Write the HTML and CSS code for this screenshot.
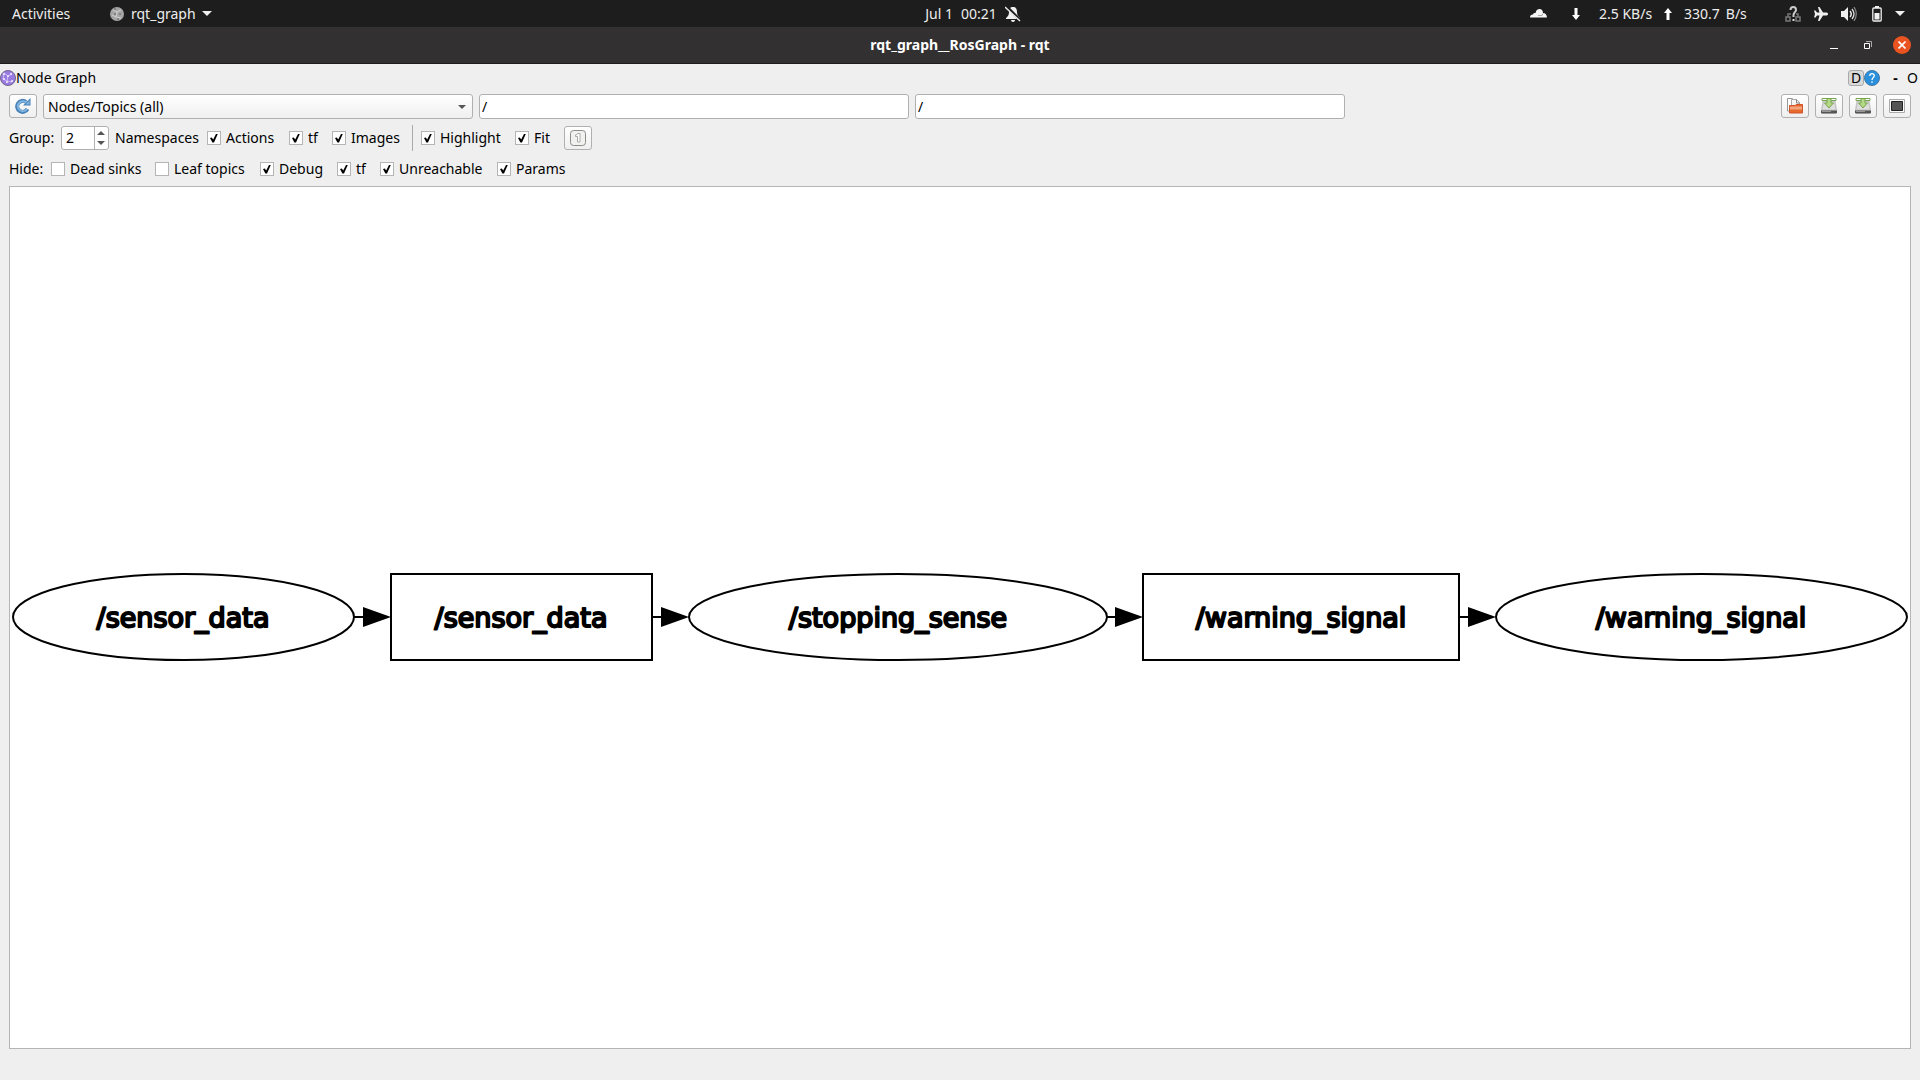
FILE: index.html
```
<!DOCTYPE html>
<html lang="en">
<head>
<meta charset="utf-8">
<title>rqt_graph__RosGraph - rqt</title>
<link rel="stylesheet" href="styles.css">
</head>
<body>
<header class="panel">
  <div class="panel-left">
    <button class="panel-button activities" type="button">Activities</button>
    <button class="panel-button app-menu" type="button">
      <svg class="app-icon" width="14" height="14" viewBox="0 0 14 14" aria-hidden="true"><circle cx="7" cy="7" r="7" fill="#a5a5a5"/><g stroke="#d0d0d0" fill="none"><path d="M3 3l4 2 4-2M7 5l-1 5 5 1M6 10l-4-2"/></g><g fill="#777"><circle cx="5" cy="7" r="1"/><circle cx="10" cy="7" r="1"/><circle cx="5" cy="2" r="1"/><circle cx="8" cy="12" r="1"/></g></svg>
      <span class="app-name">rqt_graph</span>
      <svg width="10" height="5" viewBox="0 0 10 5" aria-hidden="true"><path d="M0 0h10L5 5z" fill="#f0f0f0"/></svg>
    </button>
  </div>
  <button class="panel-button clock" type="button">
    <span>Jul 1</span><span>00:21</span>
    <svg class="bell" width="16" height="16" viewBox="0 0 16 16" aria-hidden="true"><path d="M8 1C5 1 4 3 4 6c0 3-1 4-3 6v1h14v-1c-2-2-3-3-3-6 0-3-1-5-4-5zM6 14h4c0 1-1 2-2 2s-2-1-2-2z" fill="#f0f0f0"/><path d="M1 0l15 15" stroke="#1d1d1d" stroke-width="3"/><path d="M0 1l15 14" stroke="#f0f0f0" stroke-width="1.4"/></svg>
  </button>
  <div class="panel-right">
    <svg class="cloud" width="17" height="9" viewBox="0 0 17 9" aria-label="Cloud"><path d="M0 8.500C0 6.500 1 5.500 3 5.500 3.500 4 4.500 3.800 5.500 4 6 1.500 7.500 0 9.500 0c2 0 3.500 1.500 3.500 4 2.200 0 4 1.800 4 4.500z" fill="#f5f5f5"/><path d="M8 6.500h4l1-2" stroke="#777" stroke-width=".6" fill="none"/></svg>
    <svg class="down" width="8" height="12" viewBox="0 0 8 12" aria-label="Download"><path d="M2.500 0h3v7H8l-4 5-4-5h2.500z" fill="#fff"/></svg>
    <span class="rate-down">2.5 KB/s</span>
    <svg class="up" width="8" height="12" viewBox="0 0 8 12" aria-label="Upload"><path d="M2.500 12h3V5H8L4 0 0 5h2.500z" fill="#fff"/></svg>
    <span class="rate-up"><span>330.7</span><span>B/s</span></span>
    <svg class="network" width="16" height="16" viewBox="0 0 16 16" aria-label="Network"><g fill="none" stroke="#777" stroke-width="1.500"><path d="M3 11V8h3M13 11V8h-2"/><path d="M1 11h4v4H1zM11 11h4v4h-4z"/></g><path d="M5.500 4C5.500 0 11 0 11 4c0 2-2.500 2.500-2.500 5v2" fill="none" stroke="#ccc" stroke-width="2"/><path d="M7.500 13h2v2h-2z" fill="#ddd"/></svg>
    <svg class="plane" width="14" height="14" viewBox="0 0 14 14" aria-label="Airplane mode"><path d="M4 0h1.500L9 5.500h3.500c2 0 2 3 0 3H9L5.500 14H4l1.500-5.500H3L1.500 10.500H0L1 7 0 3.500h1.500L3 5.500h2.500z" fill="#f0f0f0"/></svg>
    <svg class="sound" width="16" height="14" viewBox="0 0 16 14" aria-label="Volume"><path d="M0 4h3l4-4v14l-4-4H0z" fill="#f0f0f0"/><path d="M9 4q2.500 3 0 6" stroke="#f0f0f0" stroke-width="1.400" fill="none"/><path d="M11 2q4 5 0 10" stroke="#ddd" stroke-width="1.300" fill="none"/><path d="M13 0q4.500 7 0 14" stroke="#888" stroke-width="1.200" fill="none"/></svg>
    <svg class="battery" width="10" height="16" viewBox="0 0 10 16" aria-label="Battery"><path d="M3 0h4v2H3z" fill="#f0f0f0"/><rect x=".8" y="2" width="8.400" height="13" rx="1" fill="none" stroke="#f0f0f0" stroke-width="1.300"/><path d="M2.500 7h5v6.500h-5z" fill="#f0f0f0"/></svg>
    <svg class="menu-arrow" width="10" height="5" viewBox="0 0 10 5" aria-hidden="true"><path d="M0 0h10L5 5z" fill="#f0f0f0"/></svg>
  </div>
</header>

<div class="titlebar">
  <h1 class="title">rqt_graph__RosGraph - rqt</h1>
  <div class="window-buttons">
    <button class="window-button" type="button" aria-label="Minimize"><svg width="8" height="9" viewBox="0 0 8 9"><path d="M0 7.500h8" stroke="#fff"/></svg></button>
    <button class="window-button" type="button" aria-label="Restore"><svg width="8" height="8" viewBox="0 0 8 8"><path d="M2 .5h5.500V6" stroke="#aaa" fill="none"/><path d="M.5 2.500h5v5h-5z" stroke="#fff" fill="none"/></svg></button>
    <button class="window-button close" type="button" aria-label="Close"><svg width="8" height="8" viewBox="0 0 8 8"><path d="M.5.5l7 7M7.500.5l-7 7" stroke="#fff" stroke-width="1.600"/></svg></button>
  </div>
</div>

<main class="window">
  <div class="dock-title">
    <svg width="16" height="16" viewBox="0 0 16 16" aria-hidden="true"><circle cx="8" cy="8" r="7.500" fill="#9a7be0" stroke="#70658f"/><g stroke="#cbb9f5" fill="none"><path d="M4 3l4 3 4-2M8 6l-1 5 5 1M7 11l-4-2 1-6"/></g><g fill="#f2ecff"><circle cx="4" cy="4" r="1"/><circle cx="11" cy="4" r="1"/><circle cx="8" cy="6" r="1"/><circle cx="4" cy="9" r="1"/><circle cx="7" cy="12" r="1"/><circle cx="12" cy="11" r="1"/></g></svg>
    <h2 class="dock-name">Node Graph</h2>
    <div class="dock-buttons">
      <button class="dock-button dock-d" type="button">D</button>
      <button class="dock-button" type="button" aria-label="Help"><svg width="16" height="16" viewBox="0 0 16 16"><circle cx="8" cy="8" r="7.500" fill="#2b90dc" stroke="#3f77a6"/><path d="M5.800 6c0-3 4.500-3 4.500-.4C10.300 7.500 8 7.500 8 10M8 11.300v1.500" fill="none" stroke="#fff" stroke-width="1.300"/></svg></button>
      <button class="dock-button dock-minus" type="button">-</button>
      <button class="dock-button dock-o" type="button">O</button>
    </div>
  </div>

  <div class="toolbar">
    <button class="tool" type="button" aria-label="Refresh"><svg width="16" height="16" viewBox="0 0 16 16"><path d="M12.500 11A5.500 5.500 0 1 1 11 4" fill="none" stroke="#4681b8" stroke-width="4"/><path d="M8 7.500h7.500V0z" fill="#4681b8"/><path d="M12 11A5 5 0 1 1 11 4.300" fill="none" stroke="#82b4df" stroke-width="2"/><path d="M10.500 6.500h4V2.500z" fill="#82b4df"/></svg></button>
    <div class="combo">
      <select class="combo-select" aria-label="Graph type"><option>Nodes/Topics (all)</option></select>
      <svg class="combo-arrow" width="8" height="4" viewBox="0 0 8 4" aria-hidden="true"><path d="M0 0h8L4 4z" fill="#555"/></svg>
    </div>
    <input class="field" type="text" value="/" aria-label="Node filter">
    <input class="field" type="text" value="/" aria-label="Topic filter">
    <div class="file-tools">
      <button class="tool" type="button" aria-label="Load graph"><svg width="16" height="16" viewBox="0 0 16 16"><path d="M.5.500h5l2 2V13h-7z" fill="#fff" stroke="#999"/><path d="M4.500 1.500h5l3 3V13h-8z" fill="#f7f7f7" stroke="#aaa"/><path d="M9.500 1.500v3.500h3.500" fill="none" stroke="#888"/><path d="M2.500 7.500H8L9 6.500h6.500v8.500h-13z" fill="#e7692c" stroke="#d0532a"/><path d="M3 8.500h12v3H3z" fill="#f2a680"/></svg></button>
      <button class="tool" type="button" aria-label="Save graph as DOT"><svg width="16" height="16" viewBox="0 0 16 16"><path d="M1.500 3h13l1.500 9v3.500H0V12z" fill="#c4c4c4"/><path d="M3 4h10l1.500 7.500h-13z" fill="#dedede"/><path d="M0 12.500h16v2l-1 1H1l-1-1z" fill="#555"/><path d="M1 13.500h9" stroke="#999"/><path d="M1 .5h14v2H1z" fill="#fff" stroke="#78a552"/><path d="M6 .5h4V5h2.500L8 10 3.500 5H6z" fill="#b5d986" stroke="#76a44b"/></svg></button>
      <button class="tool" type="button" aria-label="Save graph as SVG"><svg width="16" height="16" viewBox="0 0 16 16"><path d="M1.500 3h13l1.500 9v3.500H0V12z" fill="#c4c4c4"/><path d="M3 4h10l1.500 7.500h-13z" fill="#dedede"/><path d="M0 12.500h16v2l-1 1H1l-1-1z" fill="#555"/><path d="M1 13.500h9" stroke="#999"/><path d="M1 .5h14v2H1z" fill="#fff" stroke="#78a552"/><path d="M6 .5h4V5h2.500L8 10 3.500 5H6z" fill="#b5d986" stroke="#76a44b"/></svg></button>
      <button class="tool" type="button" aria-label="Save graph as image"><svg width="16" height="14" viewBox="0 0 16 14"><path d="M.5.500h15v13H.5z" fill="#fafafa" stroke="#aaa"/><path d="M2.500 2.500h11v9h-11z" fill="#555" stroke="#222"/></svg></button>
    </div>
  </div>

  <div class="options options-group">
    <label for="group">Group:</label>
    <div class="spin">
      <input class="spin-value" id="group" type="number" value="2">
      <svg class="spin-arrows" width="14" height="22" viewBox="0 0 14 22" aria-hidden="true"><path d="M.5 0v22" stroke="#b0b0b0"/><path d="M3 8h8L7 4zM3 14h8l-4 4z" fill="#555"/></svg>
    </div>
    <span>Namespaces</span>
    <label class="check"><input type="checkbox" checked>Actions</label>
    <label class="check"><input type="checkbox" checked>tf</label>
    <label class="check"><input type="checkbox" checked>Images</label>
    <span class="separator"></span>
    <label class="check"><input type="checkbox" checked>Highlight</label>
    <label class="check"><input type="checkbox" checked>Fit</label>
    <button class="tool" type="button" aria-label="Fit in view"><svg width="16" height="16" viewBox="0 0 16 16"><rect x=".5" y=".5" width="15" height="15" rx="3" fill="#f1f1ef" stroke="#8b8b88"/><path d="M5.500 5q2 0 2-1.500h2.500v8.500h-2.500v-5.500h-2z" fill="#fff" stroke="#aaa"/></svg></button>
  </div>

  <div class="options options-hide">
    <span>Hide:</span>
    <label class="check"><input type="checkbox">Dead sinks</label>
    <label class="check"><input type="checkbox">Leaf topics</label>
    <label class="check"><input type="checkbox" checked>Debug</label>
    <label class="check"><input type="checkbox" checked>tf</label>
    <label class="check"><input type="checkbox" checked>Unreachable</label>
    <label class="check"><input type="checkbox" checked>Params</label>
  </div>

  <section class="canvas" aria-label="Node graph">
    <svg class="graph" viewBox="0 0 1900 92">
      <g class="shape">
        <ellipse cx="173.500" cy="45" rx="170.500" ry="43"/>
        <rect x="381" y="2" width="261" height="86"/>
        <ellipse cx="888" cy="45" rx="209" ry="43"/>
        <rect x="1133" y="2" width="316" height="86"/>
        <ellipse cx="1691.500" cy="45" rx="205.500" ry="43"/>
        <path d="M344 45h10M642 45h10M1097 45h9M1449 45h10"/>
      </g>
      <path d="M353 35l28 10-28 10zM651 35l28 10-28 10zM1105 35l28 10-28 10zM1458 35l28 10-28 10z"/>
      <g class="node-label">
        <text x="173" y="55">/sensor_data</text>
        <text x="511" y="55">/sensor_data</text>
        <text x="888" y="55">/stopping_sense</text>
        <text x="1291" y="55">/warning_signal</text>
        <text x="1691" y="55">/warning_signal</text>
      </g>
    </svg>
  </section>
</main>
</body>
</html>
```
FILE: styles.css
```
* {
  box-sizing: border-box;
}

body {
  display: flex;
  flex-direction: column;
  min-height: 100vh;
  margin: 0;
  background: #efefef;
  color: #000;
  font: 14px/20px "Noto Sans", sans-serif;
}

button,
input,
select {
  margin: 0;
  padding: 0;
  color: inherit;
  font: inherit;
}

svg {
  display: block;
  flex: none;
}

/* Desktop panel */
.panel {
  display: grid;
  grid-template-columns: 1fr auto 1fr;
  align-items: center;
  height: 27px;
  background: #1d1d1d;
  color: #ededed;
}

.panel-left,
.panel-right,
.panel-button {
  display: flex;
  align-items: center;
}

.panel-button {
  border: 0;
  background: none;
  white-space: nowrap;
}

.activities {
  width: 98px;
  padding-left: 12px;
}

.app-menu {
  padding-left: 12px;
}

.app-icon {
  margin-right: 7px;
}

.app-name {
  width: 71px;
  text-align: left;
}

.clock {
  gap: 8px;
  padding-left: 26px;
}

.panel-right {
  justify-content: flex-end;
  padding-right: 15px;
  white-space: nowrap;
}

.down {
  margin: 0 19px 0 25px;
}

.rate-down {
  width: 65px;
}

.rate-up {
  display: flex;
  gap: 6px;
  width: 101px;
  margin-left: 12px;
}

.plane,
.sound {
  margin-left: 13px;
}

.battery {
  margin-left: 15px;
}

.menu-arrow {
  margin-left: 13px;
}

/* Window title bar */
.titlebar {
  display: grid;
  grid-template-columns: 1fr auto 1fr;
  align-items: center;
  height: 37px;
  border-bottom: 1px solid #1f1c1d;
  background: #333031;
  color: #fff;
}

.title {
  grid-column: 2;
  margin: 0;
  font-size: 14px;
  font-weight: 700;
}

.window-buttons {
  display: flex;
  justify-content: flex-end;
  gap: 16px;
  padding-right: 9px;
}

.window-button {
  display: grid;
  place-items: center;
  width: 18px;
  height: 18px;
  border: 0;
  border-radius: 50%;
  background: none;
}

.close {
  background: #e95420;
}

/* Dock widget */
.window {
  display: flex;
  flex: 1;
  flex-direction: column;
}

.dock-title {
  display: flex;
  align-items: center;
  height: 27px;
}

.dock-name {
  margin: 0;
  font-size: 14px;
  font-weight: 400;
}

.dock-buttons {
  display: flex;
  align-items: center;
  margin-left: auto;
  padding-right: 2px;
}

.dock-button {
  min-width: 16px;
  height: 16px;
  border: 0;
  background: none;
  line-height: 16px;
}

.dock-d {
  border: 1px solid #aaa;
  border-radius: 3px;
  background: #d9d9d9;
  line-height: 14px;
}

.dock-minus {
  width: 27px;
  padding-left: 4px;
  font-weight: 700;
}

.dock-o {
  min-width: 8px;
}

.toolbar {
  display: grid;
  grid-template-columns: 28px repeat(3, minmax(0, 430fr)) minmax(130px, 560fr);
  gap: 6px;
  margin-top: 3px;
  padding: 0 9px;
}

.tool,
.combo-select,
.spin {
  border: 1px solid #b0b0b0;
  border-radius: 3px;
  background: linear-gradient(#fff, #efefef);
}

.tool {
  display: grid;
  place-items: center;
  width: 28px;
  height: 24px;
}

.combo {
  display: grid;
  align-items: center;
}

.combo-select {
  grid-area: 1 / 1;
  width: 100%;
  height: 25px;
  padding-left: 4px;
  appearance: none;
}

.combo-arrow {
  grid-area: 1 / 1;
  justify-self: end;
  margin-right: 7px;
  pointer-events: none;
}

.field {
  width: 100%;
  height: 25px;
  padding: 0 2px;
  border: 1px solid #b0b0b0;
  border-radius: 3px;
  background: #fff;
}

.file-tools {
  display: flex;
  justify-content: flex-end;
  gap: 6px;
}

.options {
  display: grid;
  align-items: center;
  padding: 0 9px;
  white-space: nowrap;
}

.options-group {
  grid-template-columns: 52px 54px 92px 82px 43px 80px 9px 94px 49px 28px;
  margin-top: 6px;
}

.options-hide {
  grid-template-columns: 42px 104px 105px 77px 43px 117px auto;
  margin-top: 7px;
  line-height: 22px;
}

.spin {
  display: flex;
  width: 48px;
  height: 24px;
  background: #fff;
}

.spin-value {
  width: 32px;
  padding-left: 4px;
  border: 0;
  background: none;
  appearance: textfield;
}

.spin-value::-webkit-inner-spin-button {
  display: none;
}

.check {
  display: flex;
  align-items: center;
  gap: 5px;
}

.check input {
  display: grid;
  flex: none;
  place-items: center;
  width: 14px;
  height: 14px;
  border: 1px solid #b5b5b5;
  background: #fff;
  appearance: none;
}

.check input:checked::before {
  width: 8px;
  height: 9px;
  background: #000;
  clip-path: polygon(0 50%, 22% 44%, 40% 66%, 78% 0, 100% 0, 50% 100%, 30% 100%);
  content: "";
}

.separator {
  width: 1px;
  height: 26px;
  background: #aaa;
}

/* Graph view */
.canvas {
  display: grid;
  flex: 1;
  align-items: center;
  margin: 6px 9px 31px;
  border: 1px solid #b5b5b5;
  background: #fff;
}

.graph {
  width: 100%;
}

.shape {
  fill: none;
  stroke: #000;
  stroke-width: 2px;
}

.node-label {
  font: 27px "DejaVu Sans", sans-serif;
  stroke: #000;
  stroke-width: 2px;
  stroke-linejoin: round;
  text-anchor: middle;
  text-rendering: geometricPrecision;
}
```
